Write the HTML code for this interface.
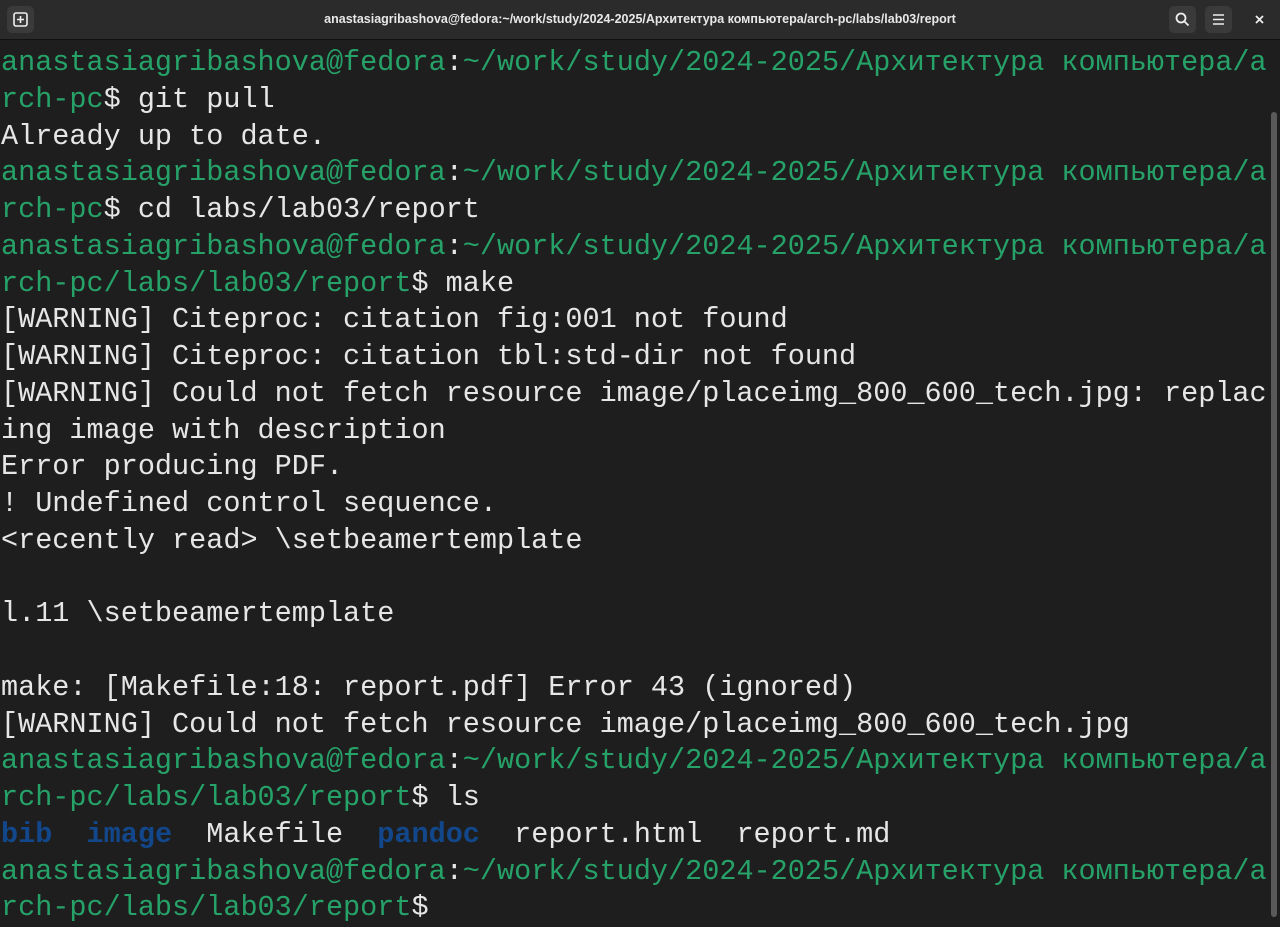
<!DOCTYPE html>
<html><head><meta charset="utf-8"><style>
html,body{margin:0;padding:0;background:#1e1e1e;width:1280px;height:922px;overflow:hidden}
.tb{position:absolute;left:0;top:0;width:1280px;height:39px;background:#2b2b2b;border-bottom:1px solid #111}
.title{position:absolute;left:0;right:0;top:12px;text-align:center;color:#e8e8e8;font:bold 12.5px "Liberation Sans","DejaVu Sans",sans-serif}
.btn{position:absolute;top:6px;width:27px;height:27px;background:#3a3a3a;border-radius:5px}
pre{position:absolute;left:1px;top:45px;margin:0;font:28.5px/36.75px "Liberation Mono","DejaVu Sans Mono",monospace;color:#e6e6e6;white-space:pre}
.g{color:#26a269}.b{color:#12488b;font-weight:bold}
.sb{position:absolute;right:3px;top:112px;width:6px;height:805px;background:#5a5a5a;border-radius:3px}
</style></head><body>
<div class="tb">
<div class="btn" style="left:7px"><svg width="27" height="27"><rect x="7" y="7" width="13" height="13" rx="2" fill="none" stroke="#eee" stroke-width="1.6"/><path d="M13.5 10v7M10 13.5h7" stroke="#eee" stroke-width="1.6"/></svg></div>
<div class="title">anastasiagribashova@fedora:~/work/study/2024-2025/Архитектура компьютера/arch-pc/labs/lab03/report</div>
<div class="btn" style="left:1169px"><svg width="27" height="27"><circle cx="12" cy="12" r="4.5" fill="none" stroke="#eee" stroke-width="1.8"/><path d="M15.5 15.5l4 4" stroke="#eee" stroke-width="1.8"/></svg></div>
<div class="btn" style="left:1205px"><svg width="27" height="27"><path d="M8 9h11M8 13.5h11M8 18h11" stroke="#eee" stroke-width="1.6"/></svg></div>
<svg style="position:absolute;left:1254px;top:14px" width="12" height="12"><path d="M2 2l7 7M9 2l-7 7" stroke="#eee" stroke-width="1.8"/></svg>
</div>
<div class="sb"></div>
<pre><span class="g">anastasiagribashova@fedora</span>:<span class="g">~/work/study/2024-2025/Архитектура компьютера/a
rch-pc</span>$ git pull
Already up to date.
<span class="g">anastasiagribashova@fedora</span>:<span class="g">~/work/study/2024-2025/Архитектура компьютера/a
rch-pc</span>$ cd labs/lab03/report
<span class="g">anastasiagribashova@fedora</span>:<span class="g">~/work/study/2024-2025/Архитектура компьютера/a
rch-pc/labs/lab03/report</span>$ make
[WARNING] Citeproc: citation fig:001 not found
[WARNING] Citeproc: citation tbl:std-dir not found
[WARNING] Could not fetch resource image/placeimg_800_600_tech.jpg: replac
ing image with description
Error producing PDF.
! Undefined control sequence.
&lt;recently read&gt; \setbeamertemplate

l.11 \setbeamertemplate

make: [Makefile:18: report.pdf] Error 43 (ignored)
[WARNING] Could not fetch resource image/placeimg_800_600_tech.jpg
<span class="g">anastasiagribashova@fedora</span>:<span class="g">~/work/study/2024-2025/Архитектура компьютера/a
rch-pc/labs/lab03/report</span>$ ls
<span class="b">bib</span>  <span class="b">image</span>  Makefile  <span class="b">pandoc</span>  report.html  report.md
<span class="g">anastasiagribashova@fedora</span>:<span class="g">~/work/study/2024-2025/Архитектура компьютера/a
rch-pc/labs/lab03/report</span>$</pre>
</body></html>
